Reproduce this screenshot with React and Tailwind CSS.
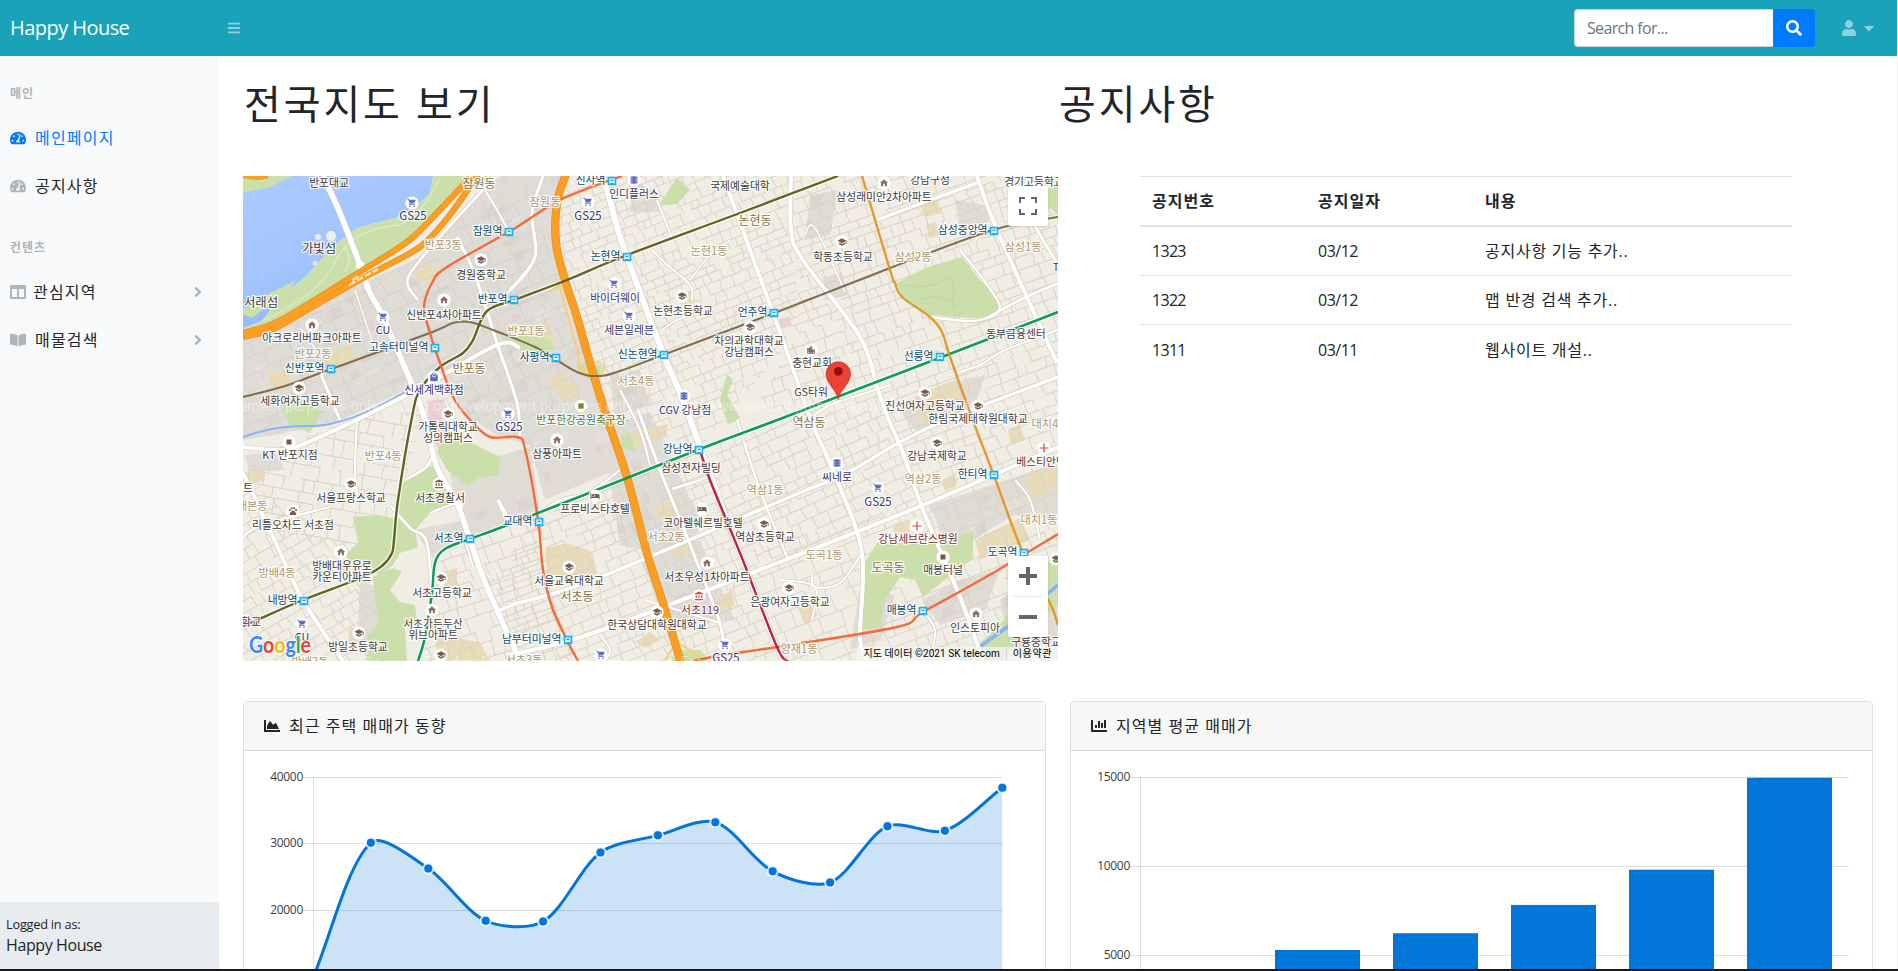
import React from "react";
import {
  FaAngleRight,
  FaBars,
  FaBookOpen,
  FaCaretDown,
  FaChartArea,
  FaChartBar,
  FaColumns,
  FaSearch,
  FaTachometerAlt,
  FaUser,
} from "react-icons/fa";
import {
  MdAccountBalance,
  MdHome,
  MdHotel,
  MdLocalMall,
  MdSchool,
  MdShoppingCart,
  MdTheaters,
  MdLocationCity,
  MdPets,
} from "react-icons/md";

/* ---------- map data (page pixels) ---------- */

const pts = (s) => s.trim().split(/\s+/).map((p) => p.split(",").map(Number));

// Smooth line through points (Catmull-Rom as cubic beziers).
function smooth(s, t = 6) {
  const p = pts(s);
  let d = `M${p[0][0]} ${p[0][1]}`;
  for (let i = 0; i < p.length - 1; i++) {
    const a = p[i - 1] || p[i];
    const b = p[i];
    const c = p[i + 1];
    const e = p[i + 2] || c;
    d += `C${b[0] + (c[0] - a[0]) / t} ${b[1] + (c[1] - a[1]) / t} ${c[0] - (e[0] - b[0]) / t} ${c[1] - (e[1] - b[1]) / t} ${c[0]} ${c[1]}`;
  }
  return d;
}

function rng(seed) {
  let s = seed;
  return () => {
    s = (s * 16807) % 2147483647;
    return s / 2147483647;
  };
}

// Irregular block pattern of back streets inside a w x h box centred on 0,0.
function streets(w, h, seed, size) {
  const r = rng(seed);
  let d = "";
  let y = -h / 2;
  while (y < h / 2) {
    const rowH = size * (0.7 + r() * 0.6);
    let x = -w / 2 + r() * size;
    let start = -w / 2;
    while (x < w / 2) {
      const skew = (r() - 0.5) * 3;
      d += `M${x.toFixed(1)} ${y.toFixed(1)}L${(x + skew).toFixed(1)} ${(y + rowH).toFixed(1)}`;
      if (r() < 0.14) {
        d += `M${start.toFixed(1)} ${y.toFixed(1)}H${x.toFixed(1)}`;
        start = x + size * 1.2;
      }
      x += size * (0.7 + r() * 1.3);
    }
    d += `M${start.toFixed(1)} ${y.toFixed(1)}H${w / 2}`;
    y += rowH;
  }
  return d;
}

function blocks(seed, n, w, h) {
  const r = rng(seed);
  return Array.from({ length: n }, () => [
    (r() - 0.5) * w,
    (r() - 0.5) * h,
    4 + r() * 14,
    3 + r() * 8,
  ]);
}

const districts = [
  { id: "nonhyeon", area: "556,176 791,176 791,230 800,330 700,448 607,418 577,317 556,243", angle: -22, seed: 11, size: 9.5 },
  { id: "samseong", area: "791,176 1058,176 1058,312 837,397 780,418 760,400 800,330", angle: -19, seed: 29, size: 11 },
  { id: "daechi", area: "837,397 1058,312 1058,447 923,505 888,418", angle: -20, seed: 37, size: 12 },
  { id: "yeoksam", area: "700,448 837,397 888,418 923,505 780,560 740,553", angle: -24, seed: 53, size: 10.5 },
  { id: "dogok", area: "740,553 923,505 1058,447 1058,661 777,661", angle: -21, seed: 71, size: 14 },
  { id: "seocho", area: "538,515 627,478 700,448 777,661 520,661 487,587", angle: -22, seed: 83, size: 11 },
  { id: "seochodong", area: "432,550 538,515 545,570 578,661 418,661", angle: -18, seed: 97, size: 13 },
  { id: "banpo4", area: "270,450 373,412 425,413 405,480 393,553 273,537 243,473", angle: 10, seed: 101, size: 14 },
  { id: "bangbae", area: "243,473 273,500 300,530 393,553 375,661 243,661", angle: -30, seed: 113, size: 11 },
  { id: "banpo2", area: "243,340 420,257 480,200 556,176 556,243 607,418 517,438 425,413 243,440", angle: -24, seed: 127, size: 17, gray: true },
];

const grayAreas = [
  "243,338 420,257 475,195 500,176 562,176 556,243 565,280 607,418 615,470 545,500 530,445 500,437 463,413 440,365 425,380 410,388 330,425 243,440",
  "430,333 510,345 520,420 463,413",
  "450,470 530,447 540,510 470,540 455,505",
  "415,530 465,520 470,540 430,555",
  "610,425 650,412 700,520 690,560 620,545 605,450",
  "930,505 1013,478 1058,462 1058,520 1013,515 973,540 945,545",
  "633,180 660,195 660,212 630,212",
  "810,195 838,190 830,235 805,240",
  "955,200 985,205 990,222 960,228",
  "900,410 940,385 985,375 970,420 915,430",
  "640,560 700,540 735,620 680,625 660,600",
  "860,590 895,595 880,640 850,650",
  "245,455 275,452 285,470 250,472",
  "360,580 395,595 380,640 358,635",
  "1000,600 1058,560 1058,640 1010,650",
  "823,278 842,272 848,295 825,300",
  "922,600 960,580 1000,570 985,610 940,625",
  "610,376 640,370 650,405 615,415",
];

const parks = [
  "433,176 493,176 460,193 433,218 407,243 363,270 307,302 273,322 243,331 243,328 262,321 280,297 303,279 337,243 357,228 395,218 418,205 430,193",
  "243,176 292,176 270,187 243,193",
  "243,309 272,292 295,281 290,291 268,306 252,318 243,314",
  "897,283 925,268 962,257 978,278 1000,300 1001,309 985,319 930,315 902,297",
  "677,178 690,190 677,204 658,206",
  "727,374 733,380 727,395 740,418 728,425 720,400",
  "282,410 288,396 310,402 322,412 310,433 290,425",
  "443,440 472,443 500,457 498,475 478,478 468,486 447,470 437,452",
  "405,480 437,463 446,480 455,505 430,513 415,530 418,547 400,553 393,565 380,575 350,562 345,555 358,543 353,517 380,515 398,520 395,500",
  "373,577 393,568 402,572 390,590 400,602 415,605 417,623 405,627 407,661 367,661 367,637 378,623",
  "862,567 877,543 940,543 973,531 973,558 923,597 915,580 900,577 885,600 880,627 862,630",
  "545,355 555,350 550,340 525,335 502,338 508,345",
  "621,435 630,432 635,450 622,450",
  "677,650 700,650 710,661 672,661",
  "1048,560 1058,555 1058,605 1020,640 1000,661 960,661 1000,625",
  "1045,190 1058,185 1058,215 1046,205",
  "576,365 590,362 602,366 600,376 583,378",
];

const tans = [
  "412,280 425,262 440,270 438,282",
  "323,352 350,345 357,360 330,368",
  "268,372 292,370 290,388 270,390",
  "525,330 545,320 556,340 545,352 528,348",
  "547,380 562,372 582,390 565,402",
  "545,548 568,543 592,552 597,572 590,580 547,575",
  "920,205 937,200 942,213 925,217",
  "926,225 935,222 938,235 929,238",
  "975,540 1020,518 1030,540 980,560",
  "632,432 668,424 665,437 634,448",
  "905,402 955,380 965,410 925,425",
  "1024,478 1055,462 1058,485 1032,500",
  "655,508 670,502 675,515 660,520",
  "435,635 480,642 490,661 438,661",
  "893,525 908,520 910,535 895,540",
  "1008,430 1020,425 1025,440 1010,445",
  "716,600 732,590 735,605 725,612",
  "635,642 650,632 660,640 645,648",
  "795,600 805,595 818,615 805,625",
  "672,545 688,540 690,552 675,560",
  "942,480 955,473 957,485 945,492",
  "243,473 262,470 265,480 250,484",
  "348,630 363,625 367,640 350,645",
  "440,572 457,568 457,585 445,588",
  "680,295 693,290 693,302 680,305",
];

const roads = [
  ["323,176 340,213 360,265 370,293 383,317 413,387 423,413 437,467 457,503 470,540 487,587 520,661", 5.5],
  ["603,176 610,200 617,227 627,257 663,353 683,400 700,447", 6],
  ["700,447 740,553 777,647 787,661", 5],
  ["723,176 773,313 790,360 810,418 837,480 862,553 860,637 867,661", 4],
  ["791,176 791,230 803,260 860,337 877,387 888,418 903,453 923,510 960,597 983,661", 4],
  ["977,176 997,230 1057,363", 4],
  ["510,605 593,580 790,497 847,473 900,442 953,417 1058,377", 3.5],
  ["510,655 593,633 780,562 923,505 1058,447", 4],
  ["243,447 283,450 313,440 373,412 420,388 497,345 520,348", 4],
  ["243,473 273,537 303,600 343,661", 4],
  ["543,176 532,213 535,257 510,290", 3],
  ["483,190 440,237 408,278 418,300", 2.6],
  ["457,237 475,275 497,343 517,403 520,438", 3],
  ["638,410 660,470 687,537 718,617 723,643", 3],
  ["390,505 410,528 427,543 432,607", 2.6],
  ["737,420 760,490 787,557", 2.4],
  ["877,220 930,200 977,183", 3.2],
  ["930,317 967,321 987,318 1000,307 985,282 960,250", 2.4],
  ["987,318 1020,300 1058,283", 2.6],
  ["1020,200 1040,235 1058,265", 3],
  ["538,515 560,500 590,492 620,470", 2],
  ["510,235 500,215 485,190", 2],
  ["500,300 525,275 535,257", 2],
  ["652,250 665,263 690,285 692,300", 2],
  ["690,280 710,255 730,240", 1.6],
  ["657,200 672,238", 2],
  ["660,332 673,322 690,315", 2],
  ["950,375 980,365 1005,350 1058,330", 2],
  ["810,418 830,405 850,398 890,385", 2],
  ["862,553 840,583 815,587 812,575", 2],
  ["620,390 640,430 650,465", 2.2],
  ["780,580 815,587 812,620", 1.8],
  ["405,480 425,468 433,455", 2.4],
  ["357,420 355,470 358,500", 2],
  ["243,537 262,525 330,507", 2.2],
  ["430,513 457,503 463,507", 2.2],
  ["498,500 508,520", 4],
  ["495,612 520,602", 3],
  ["465,540 473,567", 2],
  ["645,600 720,623", 2],
  ["320,372 340,420", 3],
  ["355,290 375,350", 1.4],
  ["300,328 320,355", 1.4],
  ["600,635 610,650 605,661", 2],
  ["923,612 935,630 930,661", 2],
  ["1010,600 1030,640", 3],
  ["1015,480 1030,500 1040,540", 2],
  ["805,235 815,228 845,292", 1.6],
  ["672,489 700,480 712,474", 2.6],
];

const rails = [
  ["#7a6544", "243,397 285,386 323,372 430,333 453,323 470,322 493,330 537,348 577,372 600,376 620,371 663,355 777,312 890,268 993,230 1058,217", 2],
  ["#54590f", "243,626 257,620 303,600 363,577 383,565 392,553 394,540 398,500 412,417 420,390 440,367 463,353 473,340 487,311 517,299 567,280 627,255 740,213 838,176", 2.4],
  ["#f4622f", "622,176 560,200 512,230 447,267 432,283 424,307 430,333 440,363 453,397 470,420 490,437 517,437 525,449 538,520 543,570 552,607 567,640 578,661", 2.4],
  ["#f4622f", "693,661 723,655 777,647 897,627 923,612 993,573 1058,534", 2.4],
  ["#00924a", "1058,312 947,355 837,397 780,419 700,449 627,478 510,524 470,539 445,549 435,563 432,593 425,637 418,661", 2.6],
  ["#b9122f", "700,450 710,480 740,553 777,647 788,661", 2.4],
  ["#e0961f", "862,176 890,270 895,283 902,297 930,317 942,332 950,357 972,418 993,473 1023,553 1050,603 1058,625", 2.4],
];

const stations = [
  ["잠원역", 509, 232], ["반포역", 514, 300], ["고속터미널역", 435, 348], ["신반포역", 331, 369],
  ["신사역", 612, 181], ["논현역", 627, 257], ["언주역", 774, 313], ["신논현역", 664, 355],
  ["사평역", 556, 358], ["삼성중앙역", 994, 231], ["선릉역", 940, 357], ["서초역", 470, 539],
  ["내방역", 304, 601], ["강남역", 699, 450], ["교대역", 539, 522], ["남부터미널역", 568, 640],
  ["한티역", 994, 475], ["도곡역", 1024, 553], ["매봉역", 923, 611],
];

const places = [
  ["cart", 412, 203, ["GS25"], 413, 216],
  ["cart", 383, 317, ["CU"], 383, 330],
  ["school", 481, 260, ["경원중학교"], 481, 275],
  ["home", 444, 300, ["신반포4차아파트"], 444, 315],
  ["home", 312, 325, ["아크로리버파크아파트"], 312, 338],
  ["school", 299, 388, ["세화여자고등학교"], 300, 401],
  ["mall", 434, 377, ["신세계백화점"], 434, 390],
  ["film", 634, 180, ["인디플러스"], 634, 194],
  ["cart", 588, 202, ["GS25"], 588, 216],
  ["none", 0, 0, ["국제예술대학"], 740, 186],
  ["cart", 614, 284, ["바이더웨이"], 615, 298],
  ["cart", 629, 316, ["세븐일레븐"], 629, 330],
  ["school", 682, 296, ["논현초등학교"], 683, 311],
  ["school", 750, 327, ["차의과학대학교", "강남캠퍼스"], 749, 341],
  ["film", 684, 396, ["CGV 강남점"], 685, 410],
  ["home", 884, 183, ["삼성래미안2차아파트"], 884, 197],
  ["none", 0, 0, ["강남구청"], 930, 180],
  ["none", 0, 0, ["경기고등학교"], 1034, 182],
  ["school", 842, 242, ["학동초등학교"], 843, 257],
  ["church", 811, 350, ["충현교회"], 812, 363],
  ["none", 0, 0, ["GS타워"], 811, 392],
  ["none", 0, 0, ["동부금융센터"], 1016, 334],
  ["school", 925, 393, ["진선여자고등학교"], 925, 406],
  ["school", 978, 406, ["한림국제대학원대학교"], 978, 419],
  ["square", 289, 442, ["KT 반포지점"], 290, 455],
  ["school", 448, 414, ["가톨릭대학교", "성의캠퍼스"], 448, 427],
  ["cart", 508, 414, ["GS25"], 509, 427],
  ["school", 351, 484, ["서울프랑스학교"], 351, 498],
  ["police", 439, 484, ["서초경찰서"], 440, 498],
  ["pets", 293, 511, ["리틀오차드 서초점"], 293, 525],
  ["home", 341, 552, ["방배대우유로", "카운티아파트"], 342, 566],
  ["school", 441, 578, ["서초고등학교"], 442, 593],
  ["home", 432, 610, ["서초가든두산", "위브아파트"], 433, 624],
  ["cart", 302, 624, ["CU"], 302, 637],
  ["school", 359, 633, ["방일초등학교"], 358, 647],
  ["school", 441, 655, [], 0, 0],
  ["home", 557, 440, ["삼풍아파트"], 557, 454],
  ["bed", 595, 496, ["프로비스타호텔"], 595, 509],
  ["none", 0, 0, ["삼성전자빌딩"], 691, 468],
  ["bed", 702, 509, ["코아텔쉐르빌호텔"], 703, 523],
  ["school", 764, 524, ["역삼초등학교"], 765, 537],
  ["school", 569, 567, ["서울교육대학교"], 569, 581],
  ["home", 707, 563, ["서초우성1차아파트"], 707, 577],
  ["fire", 699, 596, ["서초119"], 700, 610],
  ["school", 657, 612, ["한국상담대학원대학교"], 657, 625],
  ["cart", 601, 655, [], 0, 0],
  ["cart", 725, 645, ["GS25"], 726, 658],
  ["school", 789, 588, ["은광여자고등학교"], 790, 602],
  ["film", 837, 463, ["씨네로"], 837, 477],
  ["cart", 878, 488, ["GS25"], 878, 502],
  ["school", 937, 443, ["강남국제학교"], 937, 456],
  ["cross", 1044, 448, ["베스티안병원"], 1046, 462],
  ["cross", 917, 526, ["강남세브란스병원"], 918, 539],
  ["square", 943, 557, ["매봉터널"], 943, 570],
  ["home", 976, 614, ["인스토피아"], 975, 628],
  ["school", 1056, 559, [], 0, 0],
  ["none", 0, 0, ["구룡중학교"], 1036, 642],
  ["none", 0, 0, ["학교"], 251, 622],
  ["none", 0, 0, ["트"], 248, 488],
  ["none", 0, 0, ["T"], 1056, 267],
];

const dongs = [
  ["잠원동", 479, 184, 1], ["반포3동", 443, 245, 0], ["반포2동", 313, 354, 0], ["반포동", 469, 369, 1],
  ["잠원동", 545, 202, 0], ["반포1동", 526, 331, 0], ["논현동", 755, 221, 1], ["논현1동", 709, 251, 0],
  ["서초4동", 636, 381, 0], ["삼성2동", 913, 257, 0], ["삼성1동", 1023, 247, 0], ["역삼동", 809, 423, 1],
  ["반포4동", 383, 456, 0], ["방배본동", 247, 506, 0], ["방배4동", 277, 573, 0], ["서초동", 577, 597, 1],
  ["서초2동", 666, 537, 0], ["역삼1동", 765, 490, 0], ["역삼2동", 923, 479, 0], ["도곡1동", 824, 555, 0],
  ["도곡동", 888, 568, 1], ["대치1동", 1039, 520, 0], ["대치4동", 1050, 424, 0], ["양재1동", 799, 649, 0],
  ["서초3동", 524, 660, 0], ["방배3동", 310, 662, 0],
];

const glyphs = {
  cart: [MdShoppingCart, "#5c6bc0"],
  film: [MdTheaters, "#5c6bc0"],
  mall: [MdLocalMall, "#5c6bc0"],
  school: [MdSchool, "#795d4f"],
  home: [MdHome, "#8d6e63"],
  bed: [MdHotel, "#795d4f"],
  church: [MdLocationCity, "#795d4f"],
  fire: [MdAccountBalance, "#db4437"],
  police: [MdAccountBalance, "#795d4f"],
  pets: [MdPets, "#795d4f"],
};

const labelColor = {
  cart: "#35366f", film: "#35366f", mall: "#35366f", fire: "#7a3030", cross: "#7a3030",
};

function PlaceIcon({ kind, x, y }) {
  if (kind === "none") return null;
  const g = glyphs[kind];
  const Glyph = g && g[0];
  return (
    <g>
      <circle cx={x} cy={y} r="6.6" fill="#fff" />
      {Glyph && <Glyph x={x - 5} y={y - 5} size={10} color={g[1]} />}
      {kind === "square" && <rect x={x - 2.5} y={y - 2.5} width="5" height="5" fill="#795548" />}
      {kind === "cross" && <path d={`M${x - 4.5} ${y}h9M${x} ${y - 4.5}v9`} stroke="#db4437" strokeWidth="1.2" />}
    </g>
  );
}

const northLane = "243,333 273,324 307,305 363,270 407,242 433,217 453,196 473,174";
const southLane = "243,337 273,329 307,310 363,278 417,249 440,227 458,204 478,174";
const expressway = "566,174 557,203 556,243 565,280 577,317 593,373 607,418 627,477 647,553 663,603 681,663";

function MapView() {
  return (
    <div className="relative h-[485px] w-[815px] shrink-0 overflow-hidden">
      <svg viewBox="243 176 815 485" width="815" height="485" className="block [font-family:'Noto_Sans_CJK_KR',sans-serif]">
        <defs>
          <linearGradient id="river" x1="0" y1="0" x2="0.6" y2="1">
            <stop offset="0" stopColor="#accbff" />
            <stop offset="0.55" stopColor="#a3c5fd" />
            <stop offset="1" stopColor="#86b0f6" />
          </linearGradient>
          {districts.map((d) => (
            <clipPath key={d.id} id={d.id}><polygon points={d.area} /></clipPath>
          ))}
          <clipPath id="built">
            {grayAreas.map((a) => <polygon key={a} points={a} />)}
          </clipPath>
        </defs>
        <rect x="243" y="176" width="815" height="485" fill="#f0ede5" />
        {grayAreas.map((a) => <polygon key={a} points={a} fill="#dfdbd5" />)}
        <g clipPath="url(#built)">
          <g transform="translate(650 420) rotate(-24)">
            {blocks(7, 900, 900, 700).map((b, i) => (
              <rect key={i} x={b[0]} y={b[1]} width={b[2]} height={b[3]} fill={i % 3 ? "#d8d3ce" : "#e6e2dd"} opacity="0.75" />
            ))}
          </g>
        </g>
        {tans.map((a) => <polygon key={a} points={a} fill="#e8dbb9" />)}
        <polygon points="426,400 445,400 451,450 440,455 430,430" fill="#e9cfd3" />
        <polygon points="775,320 790,316 792,326 778,330" fill="#ecd3d3" />
        {districts.map((d) => {
          const p = pts(d.area);
          const cx = p.reduce((s, q) => s + q[0], 0) / p.length;
          const cy = p.reduce((s, q) => s + q[1], 0) / p.length;
          return (
            <g key={d.id} clipPath={`url(#${d.id})`}>
              <path
                transform={`translate(${cx} ${cy}) rotate(${d.angle})`}
                d={streets(560, 460, d.seed, d.size)}
                fill="none"
                stroke={d.gray ? "#cfcac4" : "#d9d2c6"}
                strokeWidth={d.gray ? 0.5 : 0.9}
              />
            </g>
          );
        })}
        <path d="M243 176H433L430 193 418 205 395 218 357 228 337 243 303 279 280 297 262 321 243 328Z" fill="url(#river)" />
        {parks.map((a) => <polygon key={a} points={a} fill="#cbdfaa" />)}
        <path d="M262 321Q320 295 335 262T400 225Q425 212 440 178M350 240q15 15 5 30M345 248q8 10 0 24" fill="none" stroke="#dcebc6" strokeWidth="1.3" />
        <path d="M905 285q25 5 38-5t10 20 30-5M920 300q20-10 40 8" fill="none" stroke="#bcd29c" strokeWidth="0.8" />
        <circle cx="318" cy="237" r="3" fill="#efefe6" />
        <circle cx="331" cy="236" r="5" fill="#efefe6" />
        <circle cx="315" cy="263" r="2.6" fill="#dbe5ea" />
        <path d="M243 437Q275 425 310 426T405 392" fill="none" stroke="#86b2fb" strokeWidth="2" />
        <path d="M960 661L1010 625 1058 585" fill="none" stroke="#86b2fb" strokeWidth="3.5" />

        <g fill="none" strokeLinejoin="round">
          {roads.map((r) => <path key={r[0]} d={smooth(r[0])} stroke="#d3cdc2" strokeWidth={r[1] + 1.2} />)}
          {roads.map((r) => <path key={r[0]} d={smooth(r[0])} stroke="#fff" strokeWidth={r[1]} />)}
          {[1, 4].map((i) => <path key={i} d={smooth(rails[i][1])} stroke="#fff" strokeWidth="5" opacity="0.75" />)}
        </g>
        <circle cx="360" cy="265" r="4" fill="#fff" />

        <g fill="none">
          <path d={smooth("243,176 258,178 268,176")} stroke="#f9a01f" strokeWidth="4" />
          <path d={smooth(southLane)} stroke="#e38c12" strokeWidth="6.2" />
          <path d={smooth(northLane)} stroke="#e38c12" strokeWidth="6.2" />
          <path d={smooth(southLane)} stroke="#fa9e25" strokeWidth="5" />
          <path d={smooth(northLane)} stroke="#fa9e25" strokeWidth="5" />
          <path d="M349 285L378 269M352 280l8-4" stroke="#fbe3b8" strokeWidth="2.4" strokeDasharray="7 2" />
          <path d={smooth("558,281 577,350 580,368 597,385 606,400")} stroke="#f7cf7a" strokeWidth="1.8" />
          <path d={smooth("565,280 550,292")} stroke="#f7cf7a" strokeWidth="2" />
          <path d="M593 373q-14-10-14-5t14 5q-3-13 7-10t-5 20" stroke="#f7cf7a" strokeWidth="1.8" />
          <path d="M665 661q6-12 12-18 18 8 20 18" stroke="#f7cf7a" strokeWidth="2" />
          <path d={smooth(expressway)} stroke="#e38c12" strokeWidth="8.2" />
          <path d={smooth(expressway)} stroke="#fa9e25" strokeWidth="7" />
          {rails.map((r) => <path key={r[1]} d={smooth(r[1])} stroke={r[0]} strokeWidth={r[2]} opacity="0.93" />)}
        </g>

        <g fill="#fff" opacity="0.4" fontSize="15" fontFamily="Roboto">
          {[411, 667].map((y) =>
            [170, 425, 680, 935].map((x) => (
              <text key={`${x}-${y}`} x={x} y={y} textLength="208">For development purposes only</text>
            ))
          )}
        </g>

        {places.map((p, i) => <PlaceIcon key={i} kind={p[0]} x={p[1]} y={p[2]} />)}
        {stations.map((s) => (
          <g key={s[0]}>
            <rect x={s[1] - 4.3} y={s[2] - 4.3} width="8.6" height="8.6" rx="0.8" fill="#19aef5" />
            <path d={`M${s[1] - 2.6} ${s[2] + 3.1}v-5.700h5.200v5.700l-1-1.200h-3.200z`} fill="#fff" />
            <path d={`M${s[1] - 1.6} ${s[2] - 0.7}h3.2`} stroke="#19aef5" strokeWidth="1.6" />
          </g>
        ))}

        <g stroke="#fff" strokeOpacity="0.85" strokeWidth="2.6" strokeLinejoin="round" paintOrder="stroke">
          {dongs.map((d, i) => (
            <text key={i} x={d[1]} y={d[2] + 4} textAnchor="middle" fill={d[3] ? "#857148" : "#ab9970"} fontSize={d[3] ? 12 : 11.2}>
              {d[0]}
            </text>
          ))}
          {stations.map((s) => (
            <text key={s[0]} x={s[1] - 6.5} y={s[2] + 3} textAnchor="end" fill="#0b4a6b" fontSize="10.8">{s[0]}</text>
          ))}
          {places.map((p, i) =>
            p[3].map((line, k) => (
              <text key={`${i}-${k}`} x={p[4]} y={p[5] + 4 + k * 11} textAnchor="middle" fill={labelColor[p[0]] || "#3f3c3a"} fontSize={p[3][0].startsWith("GS25") ? 11.4 : 10.8}>
                {line}
              </text>
            ))
          )}
          <text x="581" y="424" textAnchor="middle" fill="#4d7a33" fontSize="10.8">반포한강공원축구장</text>
          <text x="329" y="187" textAnchor="middle" fill="#3f3c3a" fontSize="10.8">반포대교</text>
          <text x="319" y="253" textAnchor="middle" fill="#3f3c3a" fontSize="12.4">가빛섬</text>
          <text x="261" y="307" textAnchor="middle" fill="#3f3c3a" fontSize="12.4">서래섬</text>
        </g>
        <circle cx="581" cy="406" r="6.2" fill="#fff" />
        <rect x="578.3" y="403.3" width="5.4" height="5.4" fill="#7a8d2a" />

        <path d="M838.3 399.5c-.8-9-12.3-15.500-12.300-25.500a12.300 12.300 0 0 1 24.600 0c0 10-11.500 16.500-12.300 25.500z" fill="#ea4335" stroke="#c5221f" strokeWidth="0.6" />
        <circle cx="838.3" cy="371.300" r="4.400" fill="#8a1310" />

        <g fontFamily="Lato" fontSize="22.5" fontWeight="700" paintOrder="stroke" stroke="#fff" strokeWidth="2" strokeOpacity="0.8">
          <text x="249" y="653" textLength="62" lengthAdjust="spacingAndGlyphs">
            <tspan fill="#4285f4">G</tspan><tspan fill="#ea4335">o</tspan><tspan fill="#fbbc05">o</tspan><tspan fill="#4285f4">g</tspan><tspan fill="#34a853">l</tspan><tspan fill="#ea4335">e</tspan>
          </text>
        </g>
      </svg>

      <button aria-label="fullscreen" className="absolute right-[10px] top-[10px] flex size-10 items-center justify-center rounded-[2px] bg-white shadow">
        <svg width="18" height="18" viewBox="0 0 18 18" fill="none" stroke="#666" strokeWidth="2">
          <path d="M1 6V1h5M12 1h5v5M17 12v5h-5M6 17H1v-5" />
        </svg>
      </button>
      <div className="absolute bottom-6 right-[10px] flex h-[81px] w-10 flex-col items-center rounded-[2px] bg-white shadow">
        <span className="flex h-10 items-center">
          <svg width="18" height="18" viewBox="0 0 18 18" stroke="#666" strokeWidth="4"><path d="M0 9h18M9 0v18" /></svg>
        </span>
        <span className="h-px w-[30px] bg-[#e6e6e6]" />
        <span className="flex h-10 items-center">
          <svg width="18" height="4" viewBox="0 0 18 4"><rect width="18" height="4" fill="#666" /></svg>
        </span>
      </div>
      <div className="absolute bottom-0 right-0 flex h-[14px] items-center whitespace-nowrap bg-[#f5f5f5]/75 text-[10px] leading-[14px] text-black [font-family:Roboto,'Noto_Sans_CJK_KR',sans-serif]">
        <span className="border-r border-[#d8d8d8] px-[6px] tracking-[0.08px]">지도 데이터 ©2021 SK telecom</span>
        <span className="px-[6px] tracking-[0.6px]">이용약관</span>
      </div>
    </div>
  );
}

/* ---------- charts ---------- */

const trend = [10000, 30162, 26263, 18394, 18287, 28682, 31274, 33259, 25849, 24159, 32651, 31984, 38451];
const regions = [4215, 5312, 6251, 7841, 9821, 14984];

function spline(p, tension) {
  const ctl = p.map((c, i) => {
    const a = p[i - 1] || c;
    const b = p[i + 1] || c;
    const d1 = Math.hypot(c[0] - a[0], c[1] - a[1]);
    const d2 = Math.hypot(b[0] - c[0], b[1] - c[1]);
    const f1 = (tension * d1) / (d1 + d2);
    const f2 = (tension * d2) / (d1 + d2);
    return [
      [c[0] - f1 * (b[0] - a[0]), c[1] - f1 * (b[1] - a[1])],
      [c[0] + f2 * (b[0] - a[0]), c[1] + f2 * (b[1] - a[1])],
    ];
  });
  return p.slice(1).reduce((d, q, i) => `${d}C${ctl[i][1]} ${ctl[i + 1][0]} ${q}`, `M${p[0]}`);
}

function Axis({ ticks, gap, right }) {
  return (
    <g>
      {ticks.map((t, i) => {
        const y = Math.round(6 + i * gap) + 0.5;
        return (
          <g key={t}>
            <path d={`M39 ${y}H${right}`} stroke="rgba(0,0,0,.125)" />
            <text x="39" y={y + 3.5} textAnchor="end" fontSize="12" fill="#3d4042">{t}</text>
          </g>
        );
      })}
      <path d="M49.500 6V300" stroke="rgba(0,0,0,.125)" />
    </g>
  );
}

const chartFont = "block [font-family:'Open_Sans',sans-serif] tracking-[-0.3px]";

function AreaChart() {
  const p = trend.map((v, i) => [49.5 + i * 57.4, 6.5 + (40000 - v) * 0.00663]);
  const line = spline(p, 0.3);
  return (
    <svg width="761" height="300" viewBox="0 0 761 300" className={chartFont}>
      <Axis ticks={[40000, 30000, 20000]} gap={66.3} right={738.3} />
      <path d={`${line}V300H49.5Z`} fill="rgba(2,117,216,.2)" />
      <path d={line} fill="none" stroke="#0275d8" strokeWidth="3" />
      {p.map((q) => (
        <circle key={q[0]} cx={q[0]} cy={q[1]} r="5" fill="#0275d8" stroke="rgba(255,255,255,.8)" strokeWidth="2" />
      ))}
    </svg>
  );
}

function BarChart() {
  return (
    <svg width="761" height="300" viewBox="0 0 761 300" className={chartFont}>
      <Axis ticks={[15000, 10000, 5000]} gap={89} right={757.5} />
      {regions.map((v, i) => (
        <rect key={v} x={49.5 + i * 118 + 16.5} y={6.5 + (15000 - v) * 0.0178} width="85" height="300" fill="#0275d8" />
      ))}
    </svg>
  );
}

/* ---------- page ---------- */

function NavItem({ icon: Icon, label, active, arrow, gap }) {
  return (
    <a className={`flex h-12 items-center pl-[10px] pr-[13px] text-base ${active ? "text-[#007bff]" : "text-[#212529]"}`}>
      <Icon size={16} className={`${gap} ${active ? "text-[#007bff]" : "text-[#adb5bd]"}`} />
      <span className="tracking-[1.2px]">{label}</span>
      {arrow && <FaAngleRight size={16} className="ml-auto text-[#adb5bd]" />}
    </a>
  );
}

function Heading({ children }) {
  return <div className="h-[58px] pl-[10px] pt-7 text-[12px] font-bold leading-[19px] tracking-[0.9px] text-[#adb5bd]">{children}</div>;
}

function Card({ icon: Icon, title, children }) {
  return (
    <section className="h-[400px] w-[803px] shrink-0 rounded-[4px] border border-[#dfdfdf] bg-white">
      <header className="flex h-[49px] items-center rounded-t-[3px] border-b border-[#d9d9d9] bg-[#f7f7f7] pl-5">
        <Icon size={16} className="mr-[9px]" />
        <span className="tracking-[1.05px]">{title}</span>
      </header>
      <div className="pl-5 pt-5">{children}</div>
    </section>
  );
}

const notices = [
  ["1323", "03/12", "공지사항 기능 추가.."],
  ["1322", "03/12", "맵 반경 검색 추가.."],
  ["1311", "03/11", "웹사이트 개설.."],
];

export default function App() {
  return (
    <div className="flex h-[971px] flex-col overflow-hidden bg-white text-base leading-6 text-[#212529] [font-family:'Open_Sans','Noto_Sans_CJK_KR',sans-serif]">
      <nav className="mr-px flex h-14 shrink-0 items-center bg-[#19a2b8]">
        <span className="w-[227px] pl-[10px] text-[20px] tracking-[-0.55px] text-white">Happy House</span>
        <FaBars size={14} className="text-white/50" />
        <div className="ml-auto flex h-[38px]">
          <input
            className="w-[199px] rounded-l-[4px] border border-r-0 border-[#ced4da] bg-white px-3 text-[16px] tracking-[-0.65px] outline-none placeholder:text-[#6c757d]"
            placeholder="Search for..."
          />
          <button aria-label="search" className="flex w-[42px] items-center justify-center rounded-r-[4px] bg-[#007bff] text-white">
            <FaSearch size={16} />
          </button>
        </div>
        <div className="ml-[26px] mr-[20px] flex items-center text-white/50">
          <FaUser size={16} />
          <FaCaretDown size={16} className="ml-[4px]" />
        </div>
      </nav>

      <div className="flex h-[913px] shrink-0 overflow-hidden">
        <aside className="flex w-[219px] shrink-0 flex-col bg-[#f8f9fa]">
          <Heading>메인</Heading>
          <NavItem icon={FaTachometerAlt} label="메인페이지" active gap="mr-[9px]" />
          <NavItem icon={FaTachometerAlt} label="공지사항" gap="mr-[9px]" />
          <Heading>컨텐츠</Heading>
          <NavItem icon={FaColumns} label="관심지역" arrow gap="mr-[7px]" />
          <NavItem icon={FaBookOpen} label="매물검색" arrow gap="mr-[9px]" />
          <footer className="mt-auto h-[67px] bg-[#e9ecef] pl-[6px] pt-3">
            <div className="text-[12.8px] leading-[20px] tracking-[-0.25px]">Logged in as:</div>
            <div className="leading-[22px] tracking-[-0.4px]">Happy House</div>
          </footer>
        </aside>

        <main className="flex min-w-0 flex-1 flex-col border-r border-[#f0f0f0] pl-6">
          <div className="flex h-[120px] shrink-0 pt-6 text-[40px] leading-[48px] tracking-[2.9px]">
            <h1 className="w-[815px] pl-px">전국지도 보기</h1>
            <h1 className="pl-px">공지사항</h1>
          </div>
          <div className="flex">
            <MapView />
            <table className="ml-[82px] h-fit w-[652px] table-fixed border-separate border-spacing-0 text-left">
              <thead>
                <tr>
                  <th className="h-[51px] w-[166px] border-b-2 border-t border-[#dee2e6] py-0 pl-3 pr-0 font-bold tracking-[1px]">공지번호</th>
                  <th className="w-[167px] border-b-2 border-t border-[#dee2e6] py-0 pl-3 pr-0 font-bold tracking-[1px]">공지일자</th>
                  <th className="border-b-2 border-t border-[#dee2e6] py-0 pl-3 pr-0 font-bold tracking-[1px]">내용</th>
                </tr>
              </thead>
              <tbody>
                {notices.map((n) => (
                  <tr key={n[0]} className="[&:last-child>td]:border-b-0">
                    <td className="h-[49px] border-b border-[#dee2e6] py-0 pl-3 pr-0 tracking-[-0.7px]">{n[0]}</td>
                    <td className="border-b border-[#dee2e6] py-0 pl-3 pr-0 tracking-[-0.5px]">{n[1]}</td>
                    <td className="border-b border-[#dee2e6] py-0 pl-3 pr-0 tracking-[0.75px]">{n[2]}</td>
                  </tr>
                ))}
              </tbody>
            </table>
          </div>
          <div className="mt-10 flex gap-6">
            <Card icon={FaChartArea} title="최근 주택 매매가 동향"><AreaChart /></Card>
            <Card icon={FaChartBar} title="지역별 평균 매매가"><BarChart /></Card>
          </div>
        </main>
      </div>
      <div className="h-[2px] shrink-0 bg-[#19191d]" />
    </div>
  );
}
